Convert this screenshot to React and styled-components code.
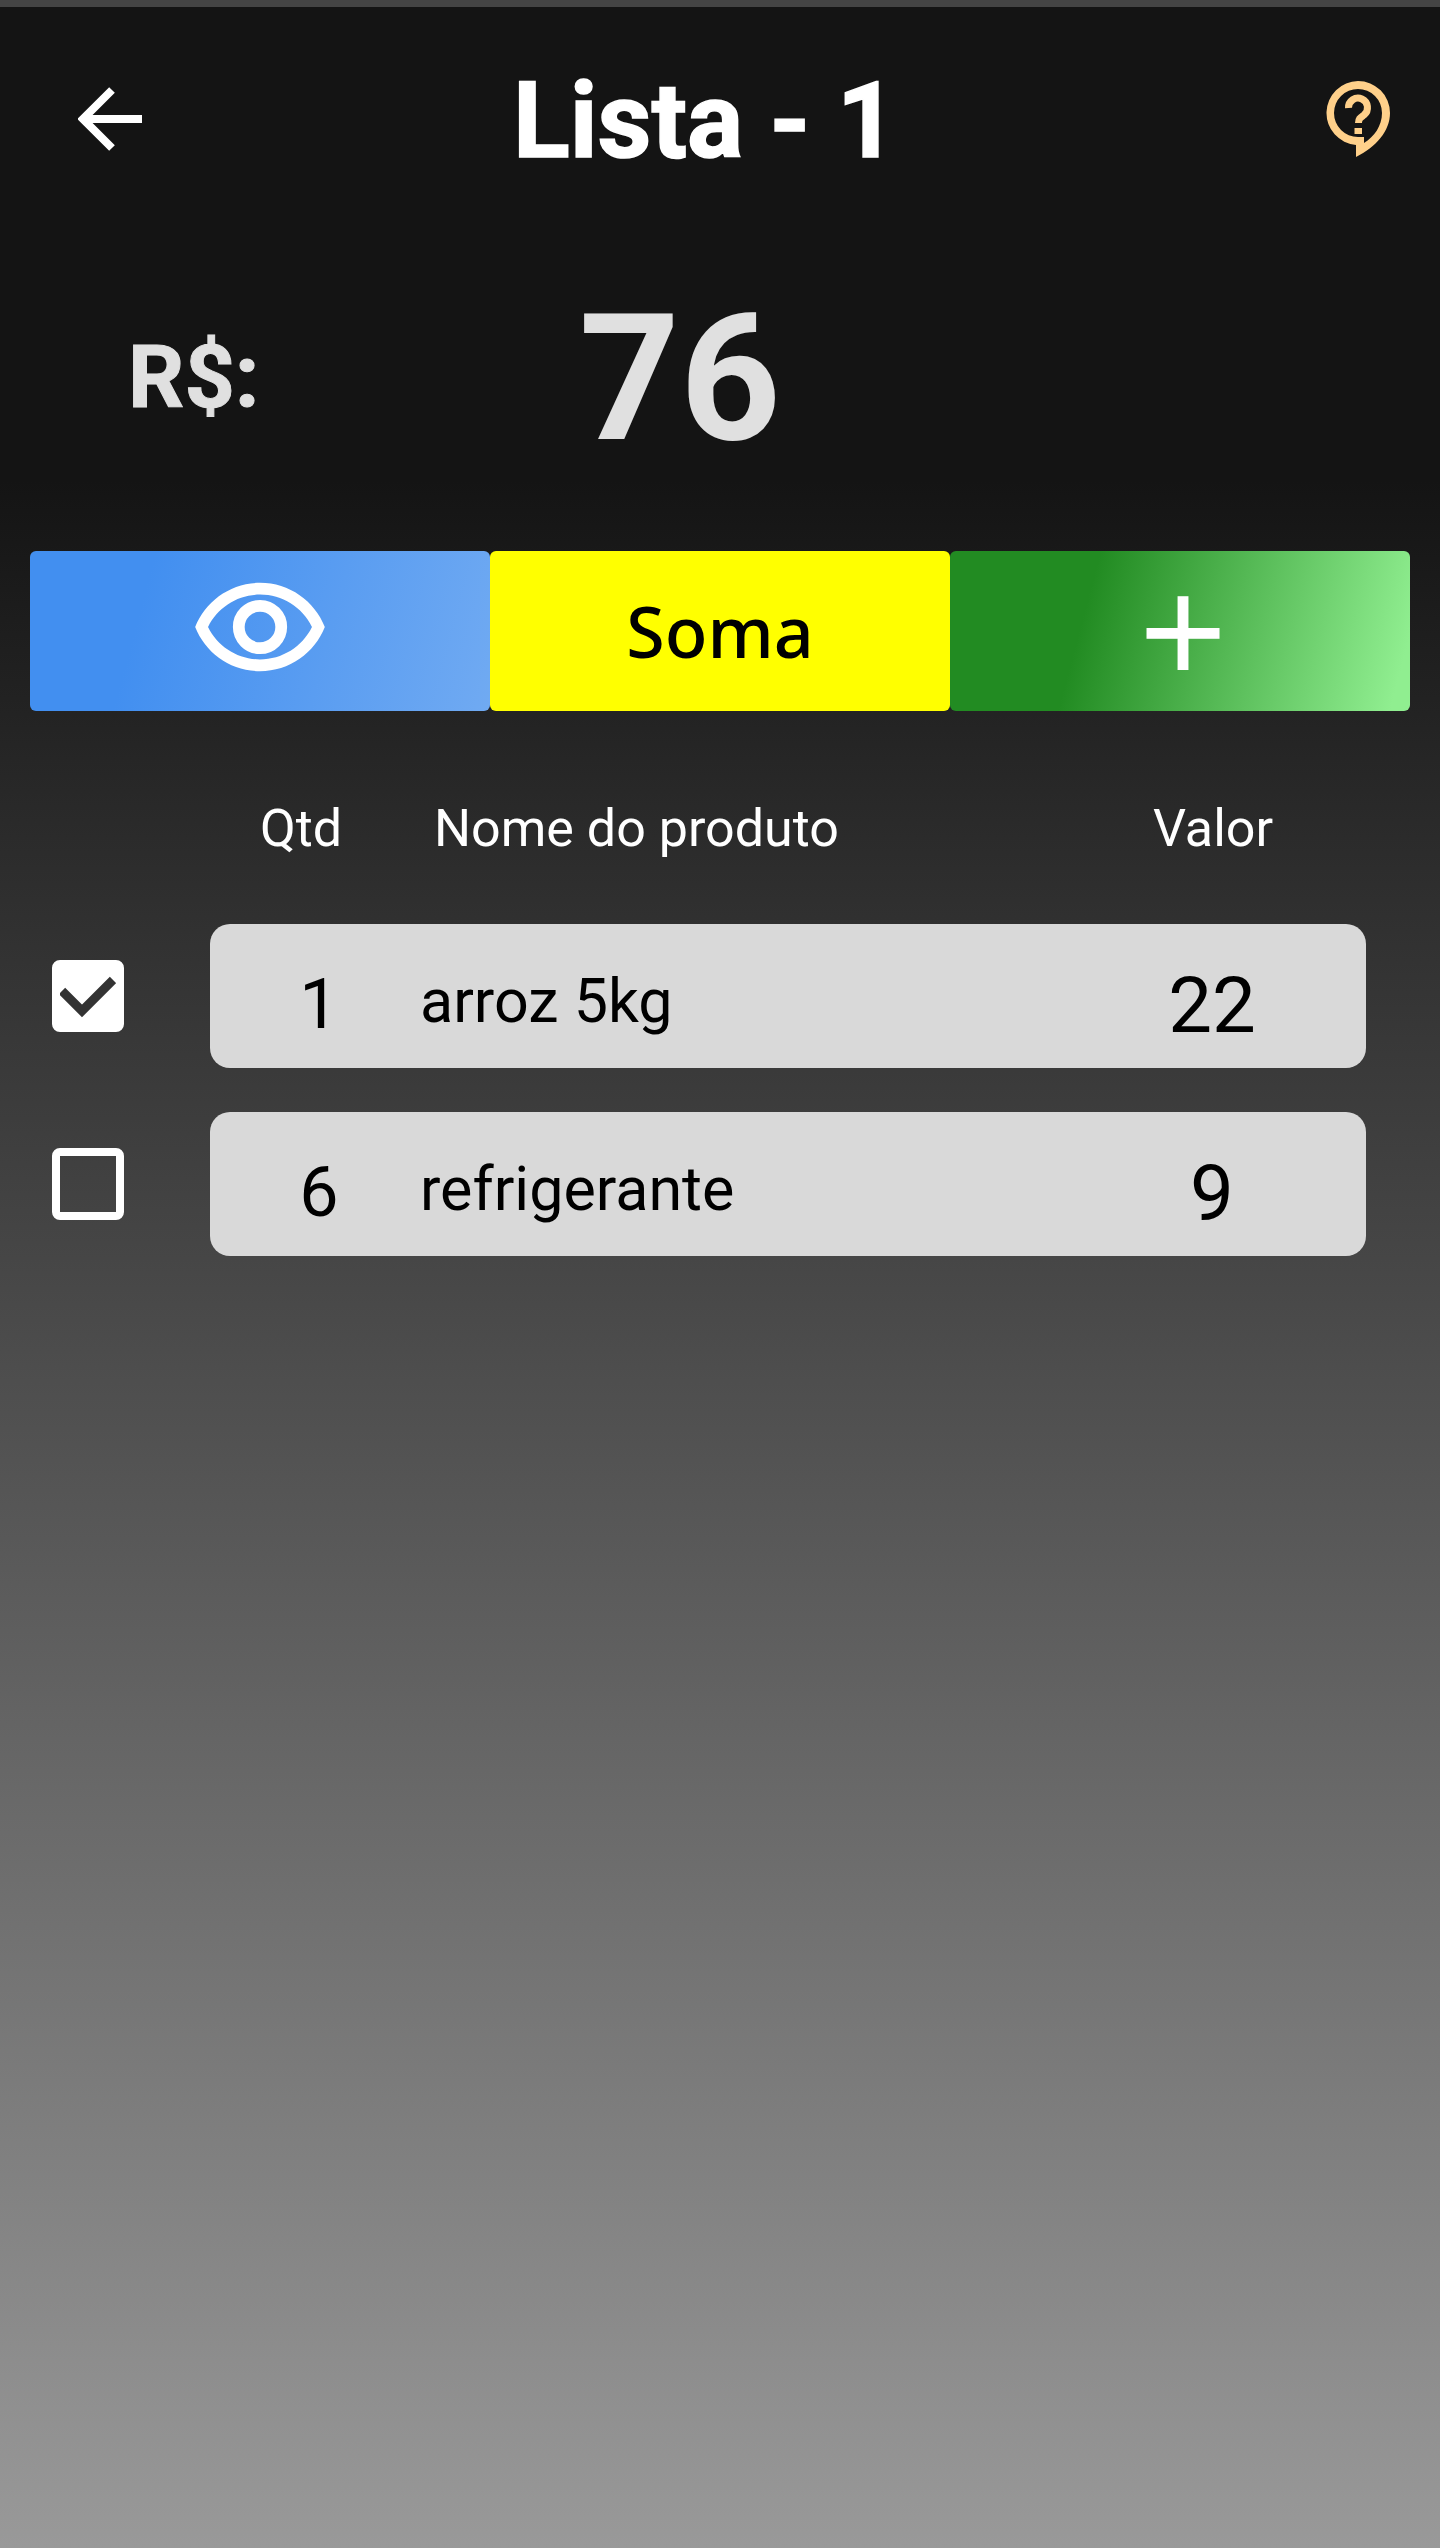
import React from 'react';
import styled, { createGlobalStyle } from 'styled-components';

const GlobalStyle = createGlobalStyle`
  html, body {
    margin: 0;
    padding: 0;
  }

  body {
    font-family: Roboto, "Liberation Sans", sans-serif;
    background-color: #999999;
  }
`;

const Page = styled.div`
  display: flex;
  flex-direction: column;

  width: 1440px;
  min-height: 2548px;

  background: linear-gradient(180deg, #141414 0, #141414 480px, #999999 100%);
`;

const StatusBar = styled.div`
  height: 7px;
  background-color: #444444;
`;

const Header = styled.header`
  display: grid;
  grid-template-columns: 435px 361px 1fr;
  align-items: center;

  height: 228px;
  padding-left: 78px;
  padding-right: 50px;
  box-sizing: border-box;
`;

const BackIcon = styled.svg`
  margin-bottom: 4px;
`;

const Title = styled.h1`
  margin: 0;

  font-size: 105px;
  font-weight: 700;
  line-height: 1;
  color: #ffffff;
  white-space: nowrap;
  -webkit-text-stroke: 1.5px #ffffff;
`;

const HelpIcon = styled.svg`
  justify-self: end;
  margin-bottom: 4px;
`;

const Total = styled.div`
  display: flex;
  align-items: center;

  height: 280px;
  padding-left: 130px;
  padding-top: 18px;
  padding-bottom: 10px;
  box-sizing: border-box;

  font-weight: 700;
  color: #e0e0e0;
`;

const Currency = styled.span`
  width: 449px;
  margin-bottom: 6px;
  margin-left: -2px;
  padding-right: 2px;
  font-size: 88px;
  -webkit-text-stroke: 1px #e0e0e0;
`;

const Amount = styled.span`
  font-size: 176px;
  line-height: 1;
`;

const Actions = styled.div`
  display: grid;
  grid-template-columns: repeat(3, 460px);

  height: 160px;
  margin: 36px 30px 0;
`;

const ActionButton = styled.button`
  display: flex;
  align-items: center;
  justify-content: center;

  padding: 0;
  border: 0;
  border-radius: 6px;

  background: ${props => props.$bg};
  color: ${props => props.$color};
`;

const EyeIcon = styled.svg`
  margin-bottom: 8px;
`;

const SumLabel = styled.span`
  font-family: "Noto Sans", sans-serif;
  font-size: 70px;
  font-weight: 500;
  line-height: 1;
`;

const PlusLabel = styled.span`
  margin-left: 6px;
  font-size: 150px;
  font-weight: 400;
  line-height: 1;
`;

const TableHead = styled.div`
  display: grid;
  grid-template-columns: 182px 1fr 304px;

  margin: 87px 75px 0 210px;

  font-size: 52px;
  line-height: 62px;
  color: #ffffff;
`;

const HeadCell = styled.span`
  text-align: ${props => props.$align || 'left'};
  padding-left: ${props => props.$indent || 0};
`;

const List = styled.div`
  display: flex;
  flex-direction: column;
  gap: 44px;

  margin-top: 64px;
  padding-left: 52px;
  width: 1366px;
  box-sizing: border-box;
`;

const Item = styled.div`
  display: flex;
  align-items: center;
  gap: 86px;
`;

const CheckBox = styled.div`
  display: flex;
  align-items: center;
  justify-content: center;
  flex: none;

  width: 72px;
  height: 72px;
  box-sizing: border-box;

  border: 8px solid #ffffff;
  border-radius: 8px;
  background-color: ${props => props.$checked ? '#ffffff' : 'transparent'};
`;

const Row = styled.div`
  display: grid;
  grid-template-columns: 210px 1fr 306px;
  align-items: center;

  flex: 1;
  height: 144px;
  padding-top: 12px;
  box-sizing: border-box;

  border-radius: 20px;
  background-color: #d9d9d9;
  color: #000000;
`;

const Qty = styled.span`
  padding-left: 8px;
  padding-top: 4px;
  font-size: 70px;
  text-align: center;
`;

const Name = styled.span`
  padding-bottom: 2px;
  font-size: 61px;
`;

const Price = styled.span`
  padding-top: 6px;
  padding-right: 2px;
  font-size: 78px;
  text-align: center;
`;

const items = [
  { qty: 1, name: 'arroz 5kg', price: 22, checked: true },
  { qty: 6, name: 'refrigerante', price: 9, checked: false },
];

const App = () => (
  <>
    <GlobalStyle />
    <Page>
      <StatusBar />
      <Header>
        <BackIcon width="66" height="68" viewBox="0 0 66 68" fill="none" stroke="#ffffff" strokeWidth="8">
          <path d="M64 34H6" />
          <path d="M34 5L5 34l29 29" />
        </BackIcon>
        <Title>Lista - 1</Title>
        <HelpIcon width="64" height="76" viewBox="0 0 64 76">
          <path
            fill="#ffd08a"
            fillRule="evenodd"
            d="M32 0A32 32 0 0 1 64 32C64 50 50 66 30 76V63.9A32 32 0 0 1 32 0ZM32 8A24 24 0 0 0 32 56H38V62C48 56 56 45 56 32A24 24 0 0 0 32 8Z"
          />
          <path
            d="M22.5 27a9.5 9.5 0 1 1 15.5 7c-3.5 2.6-5.5 3.5-5.5 8"
            fill="none"
            stroke="#ffd08a"
            strokeWidth="7"
          />
          <rect x="28.5" y="47" width="7.5" height="6" fill="#ffd08a" />
        </HelpIcon>
      </Header>
      <Total>
        <Currency>R$:</Currency>
        <Amount>76</Amount>
      </Total>
      <Actions>
        <ActionButton $bg="linear-gradient(105deg, #428ff0 0%, #428ff0 25%, #70aaf2 100%)">
          <EyeIcon width="132" height="92" viewBox="0.8 4.3 22.4 15.4">
            <path
              fill="#ffffff"
              fillRule="evenodd"
              d="M12,4.5C17,4.5 21.27,7.61 23,12C21.27,16.39 17,19.5 12,19.5C7,19.5 2.73,16.39 1,12C2.73,7.61 7,4.5 12,4.5M3.18,12C4.83,15.36 8.24,17.5 12,17.5C15.76,17.5 19.17,15.36 20.82,12C19.17,8.64 15.76,6.5 12,6.5C8.24,6.5 4.83,8.64 3.18,12Z"
            />
            <circle cx="12" cy="12" r="3.6" fill="none" stroke="#ffffff" strokeWidth="2" />
          </EyeIcon>
        </ActionButton>
        <ActionButton $bg="#ffff00" $color="#000000">
          <SumLabel>Soma</SumLabel>
        </ActionButton>
        <ActionButton $bg="linear-gradient(105deg, #228b22 0%, #228b22 30%, #90ee90 96%)" $color="#ffffff">
          <PlusLabel>+</PlusLabel>
        </ActionButton>
      </Actions>
      <TableHead>
        <HeadCell $indent="50px">Qtd</HeadCell>
        <HeadCell $indent="42px">Nome do produto</HeadCell>
        <HeadCell $align="center">Valor</HeadCell>
      </TableHead>
      <List>
        {items.map(item => (
          <Item key={item.name}>
            <CheckBox $checked={item.checked}>
              {item.checked && (
                <svg width="56" height="44" viewBox="0 0 56 44" fill="none" stroke="#333333" strokeWidth="9">
                  <path d="M2 17l20 20L53 6" />
                </svg>
              )}
            </CheckBox>
            <Row>
              <Qty>{item.qty}</Qty>
              <Name>{item.name}</Name>
              <Price>{item.price}</Price>
            </Row>
          </Item>
        ))}
      </List>
    </Page>
  </>
);

export default App;
